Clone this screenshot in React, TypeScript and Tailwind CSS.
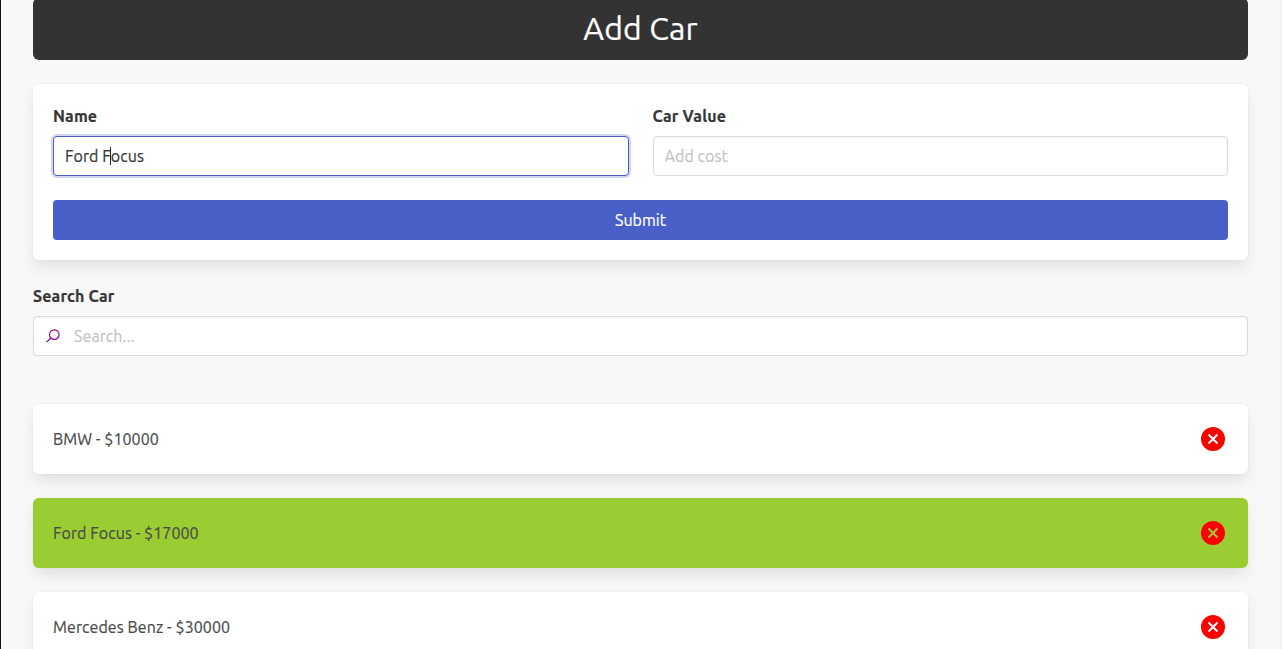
import { useState } from "react";

const cars = [
  { name: "BMW", cost: 10000 },
  { name: "Ford Focus", cost: 17000 },
  { name: "Mercedes Benz", cost: 30000 },
];

const cardShadow =
  "shadow-[0_8px_16px_-2px_rgba(10,10,10,0.1),0_0_0_1px_rgba(10,10,10,0.02)]";

function DeleteIcon() {
  return (
    <svg viewBox="0 0 24 24" className="size-6" aria-hidden="true">
      <path
        fill="#ff0000"
        fillRule="evenodd"
        d="M12 0a12 12 0 1 0 0 24a12 12 0 1 0 0-24zM8.2 6.8L12 10.6l3.8-3.8 1.4 1.4-3.8 3.8 3.8 3.8-1.4 1.4-3.8-3.8-3.8 3.8-1.4-1.4 3.8-3.8-3.8-3.8z"
      />
    </svg>
  );
}

function SearchIcon() {
  return (
    <svg viewBox="0 0 14 14" className="size-3.5" fill="none" stroke="#8b008b" strokeWidth="1.15" aria-hidden="true">
      <circle cx="8.3" cy="5.6" r="4.8" />
      <path d="M4.9 9L0.6 13.1" />
    </svg>
  );
}

export default function App() {
  const [name, setName] = useState("Ford Focus");
  const [cost, setCost] = useState("");
  const [search, setSearch] = useState("");

  return (
    <div className="h-[649px] overflow-hidden border-l border-[#111] bg-[#f8f8f8] font-['Ubuntu','Noto_Sans',sans-serif] text-base leading-6 text-[#4a4a4a] [-webkit-text-stroke:0.2px]">
      <div className="h-[651px] border-r-2 border-[#f2f2f2] px-8">
        <h1 className="-mt-0.5 h-[62px] rounded-md bg-[#333] pt-1.5 text-center text-[32px] leading-[48px] tracking-[0.1px] text-white">
          Add Car
        </h1>

        <form className={`mt-6 h-44 rounded-md bg-white p-5 ${cardShadow}`} onSubmit={(e) => e.preventDefault()}>
          <div className="grid grid-cols-2 gap-6">
            <label className="block font-bold tracking-[0.15px] text-[#363636]">
              Name
              <span className="relative mt-2 block">
                <input
                  className="block h-10 w-full rounded border border-[#485fc7] bg-white px-[11px] font-normal tracking-[0.08px] text-[#363636] shadow-[0_0_0_2px_rgba(72,95,199,0.25)] outline-none"
                  value={name}
                  onChange={(e) => setName(e.target.value)}
                />
                <span className="absolute left-[57px] top-[11px] h-[18px] w-px bg-[#222]" />
              </span>
            </label>
            <label className="block font-bold tracking-[0.15px] text-[#363636]">
              Car Value
              <input
                className="mt-2 block h-10 w-full rounded border border-[#dbdbdb] bg-white px-[11px] font-normal tracking-[0.08px] shadow-[inset_0_1px_2px_rgba(10,10,10,0.05)] outline-none placeholder:text-[#c3c3c3]"
                placeholder="Add cost"
                value={cost}
                onChange={(e) => setCost(e.target.value)}
              />
            </label>
          </div>
          <button className="mt-6 block h-10 w-full rounded bg-[#485fc7] text-white">Submit</button>
        </form>

        <label className="mt-6 block font-bold tracking-[0.15px] text-[#363636]">
          Search Car
          <span className="mt-2 flex h-10 items-center rounded border border-[#dbdbdb] bg-white pl-3 shadow-[inset_0_1px_2px_rgba(10,10,10,0.05)]">
            <SearchIcon />
            <input
              className="ml-3.5 flex-1 bg-transparent font-normal tracking-[0.08px] outline-none placeholder:text-[#c3c3c3]"
              placeholder="Search..."
              value={search}
              onChange={(e) => setSearch(e.target.value)}
            />
          </span>
        </label>

        <ul className="mt-12 flex flex-col gap-6">
          {cars.map((car) => (
            <li
              key={car.name}
              className={`flex h-[70px] shrink-0 items-center justify-between rounded-md pl-5 pr-[23px] ${cardShadow} ${
                name === car.name ? "bg-[#9acd32]" : "bg-white"
              }`}
            >
              <span className="tracking-[0.08px]">{`${car.name} - $${car.cost}`}</span>
              <button aria-label={`Delete ${car.name}`}>
                <DeleteIcon />
              </button>
            </li>
          ))}
        </ul>
      </div>
    </div>
  );
}
